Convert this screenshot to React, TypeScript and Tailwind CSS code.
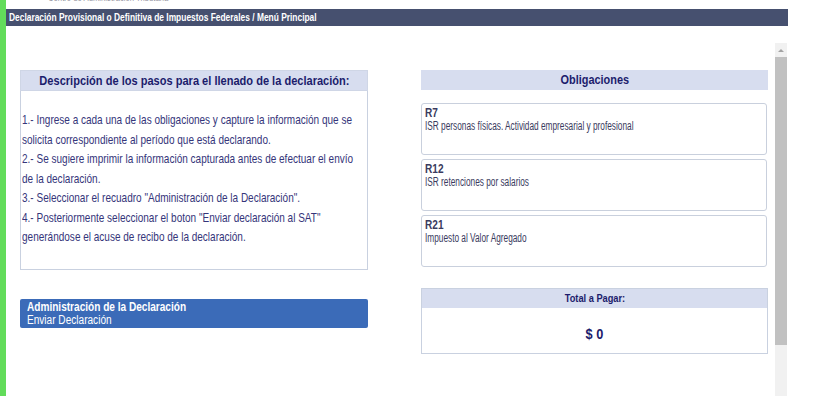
import React from "react";

const font = "font-['Liberation_Sans',Arial,sans-serif]";

// the original page uses a narrow face; squeeze Liberation Sans to match
const pasos = [
  "1.- Ingrese a cada una de las obligaciones y capture la información que se",
  "solicita correspondiente al período que está declarando.",
  "2.- Se sugiere imprimir la información capturada antes de efectuar el envío",
  "de la declaración.",
  '3.- Seleccionar el recuadro "Administración de la Declaración".',
  '4.- Posteriormente seleccionar el boton "Enviar declaración al SAT"',
  "generándose el acuse de recibo de la declaración.",
];

const obligaciones = [
  { clave: "R7", nombre: "ISR personas físicas. Actividad empresarial y profesional" },
  { clave: "R12", nombre: "ISR retenciones por salarios" },
  { clave: "R21", nombre: "Impuesto al Valor Agregado" },
];

const App = () => {
  return (
    <div className={`flex w-[824px] h-[396px] overflow-hidden bg-white ${font}`}>
      <div className="w-[6px] shrink-0 bg-[#62dc5a]" />
      <div className="w-[782px] shrink-0 flex flex-col">
        {/* cut off line above the title bar */}
        <div className="h-[9px] overflow-hidden pl-[42px]">
          <div className="-mt-[9px] text-[11px] leading-[12px] text-[#9a9aa6]">
            <span className="inline-block whitespace-nowrap origin-left scale-x-[0.7]">
              Centro de Administración Tributaria
            </span>
          </div>
        </div>
        <div className="h-[17px] bg-[#46506f] pl-[3px] text-[10.5px] leading-[17px] font-bold text-white">
          <span className="inline-block whitespace-nowrap origin-left scale-x-[0.8]">
            Declaración Provisional o Definitiva de Impuestos Federales / Menú Principal
          </span>
        </div>

        <div className="flex flex-1">
          <div className="flex-1 flex gap-[53px] pl-[14px] pr-[7px] pt-[44px]">
            {/* Left column */}
            <div className="w-[348px] flex flex-col">
              <div className="h-[21px] bg-[#d7ddef] border border-[#cfd6e6] flex justify-center text-[13px] leading-[19px] font-bold text-[#1c1c6c]">
                <span className="whitespace-nowrap scale-x-[0.85]">
                  Descripción de los pasos para el llenado de la declaración:
                </span>
              </div>
              <div className="h-[179px] border border-t-0 border-[#c9d1e0] pl-[1px] pt-[19px] text-[13px] leading-[19.5px] text-[#35357a]">
                {pasos.map((p) => (
                  <div key={p}>
                    <span className="inline-block whitespace-nowrap origin-left scale-x-[0.77]">{p}</span>
                  </div>
                ))}
              </div>
              <div className="mt-[29px] h-[29px] rounded-[2px] bg-[#3b6bb8] px-[7px] pt-[2px] text-[12px] leading-[13px] text-white">
                <div className="font-bold">
                  <span className="inline-block whitespace-nowrap origin-left scale-x-[0.84]">
                    Administración de la Declaración
                  </span>
                </div>
                <div>
                  <span className="inline-block whitespace-nowrap origin-left scale-x-[0.84]">
                    Enviar Declaración
                  </span>
                </div>
              </div>
            </div>

            {/* Right column */}
            <div className="w-[347px] flex flex-col">
              <div className="h-[20px] bg-[#d7ddef] flex justify-center text-[13px] leading-[20px] font-bold text-[#1c1c6c]">
                <span className="whitespace-nowrap scale-x-[0.84]">Obligaciones</span>
              </div>
              <div className="mt-[13px] flex flex-col gap-[4px] pr-[1px]">
                {obligaciones.map((o) => (
                  <div
                    key={o.clave}
                    className="h-[52px] rounded-[3px] border border-[#c9d0dd] px-[3px] pt-[3px] text-[12px] leading-[13px] text-[#3a3b5e]"
                  >
                    <div className="font-bold">
                      <span className="inline-block whitespace-nowrap origin-left scale-x-[0.84]">{o.clave}</span>
                    </div>
                    <div>
                      <span className="inline-block whitespace-nowrap origin-left scale-x-[0.69]">{o.nombre}</span>
                    </div>
                  </div>
                ))}
              </div>
              <div className="mt-[21px] h-[66px] border border-[#c9d1e0] flex flex-col">
                <div className="h-[19px] bg-[#d7ddef] flex justify-center text-[11px] leading-[19px] font-bold text-[#1c1c6c]">
                  <span className="whitespace-nowrap scale-x-[0.84]">Total a Pagar:</span>
                </div>
                <div className="flex-1 flex items-center justify-center pt-[8px] text-[15px] font-bold text-[#1c1c6c]">
                  <span className="whitespace-nowrap scale-x-[0.85]">$ 0</span>
                </div>
              </div>
            </div>
          </div>

          {/* Scrollbar */}
          <div className="mt-[17px] mr-[1px] w-[12px] flex flex-col bg-[#f1f1f1]">
            <div className="h-[14px] flex items-center justify-center">
              <div className="w-0 h-0 border-l-[3px] border-r-[3px] border-b-[3px] border-l-transparent border-r-transparent border-b-[#a3a3a3]" />
            </div>
            <div className="h-[288px] bg-[#c1c1c1]" />
          </div>
        </div>
      </div>
    </div>
  );
};

export default App;
